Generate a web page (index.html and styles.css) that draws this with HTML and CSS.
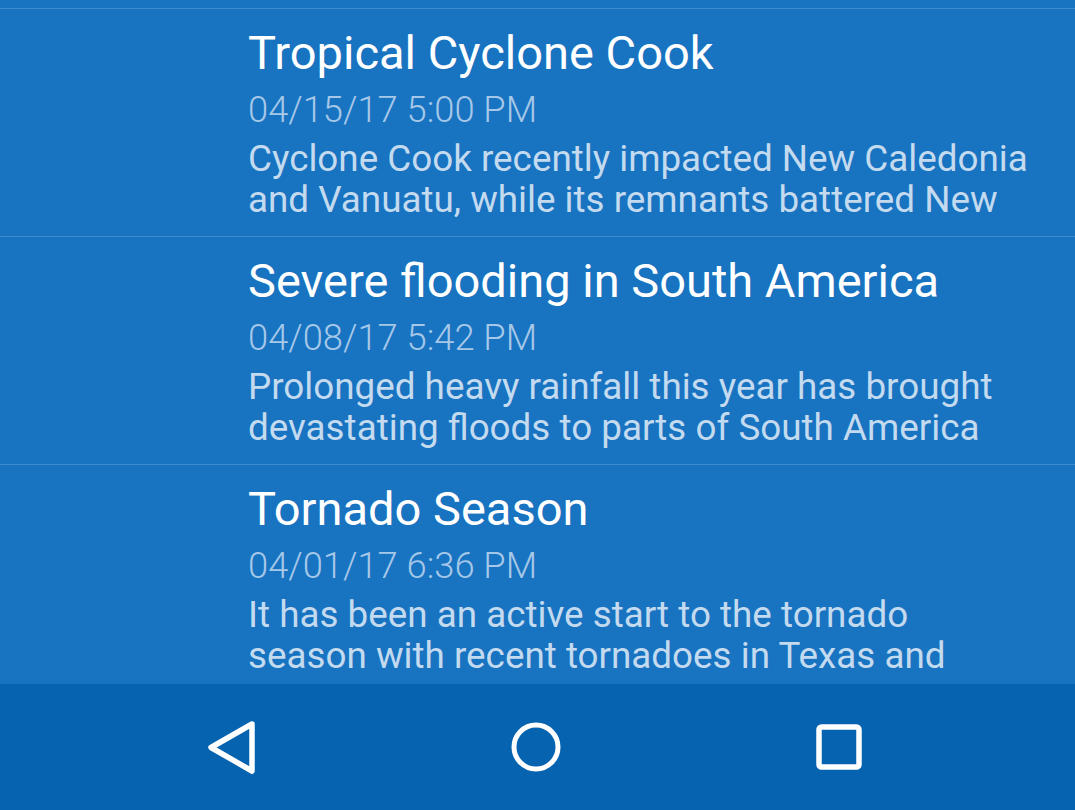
FILE: index.html
```html
<!DOCTYPE html>
<html>
<head>
<meta charset="utf-8">
<link rel="stylesheet" href="styles.css">
</head>
<body>
<div class="screen">
  <div class="list">
    <div class="spacer"></div>
    <div class="item">
      <div class="title">Tropical Cyclone Cook</div>
      <div class="date">04/15/17 5:00 PM</div>
      <div class="desc">
        <span class="line">Cyclone Cook recently impacted New Caledonia</span>
        <span class="line">and Vanuatu, while its remnants battered New</span>
      </div>
    </div>
    <div class="item">
      <div class="title">Severe flooding in South America</div>
      <div class="date">04/08/17 5:42 PM</div>
      <div class="desc">
        <span class="line">Prolonged heavy rainfall this year has brought</span>
        <span class="line">devastating floods to parts of South America</span>
      </div>
    </div>
    <div class="item">
      <div class="title">Tornado Season</div>
      <div class="date">04/01/17 6:36 PM</div>
      <div class="desc">
        <span class="line">It has been an active start to the tornado</span>
        <span class="line">season with recent tornadoes in Texas and</span>
      </div>
    </div>
  </div>
  <div class="navbar">
    <svg class="nav-icon" width="60" height="60" viewBox="0 0 60 60">
      <path d="M50 7 L9 30.5 L50 54 Z" fill="none" stroke="#fff" stroke-width="5.5" stroke-linejoin="round"/>
    </svg>
    <svg class="nav-icon" width="60" height="60" viewBox="0 0 60 60">
      <circle cx="30" cy="30" r="22" fill="none" stroke="#fff" stroke-width="5"/>
    </svg>
    <svg class="nav-icon" width="60" height="60" viewBox="0 0 60 60">
      <rect x="10" y="10" width="40" height="40" rx="2.5" fill="none" stroke="#fff" stroke-width="5.5"/>
    </svg>
  </div>
</div>
</body>
</html>
```
FILE: styles.css
```css
html, body {
  margin: 0;
  padding: 0;
}
body {
  width: 1075px;
  height: 810px;
  overflow: hidden;
  background: #1873c1;
  font-family: Roboto, "Liberation Sans", sans-serif;
}
.screen {
  display: flex;
  flex-direction: column;
  height: 810px;
}
.list {
  flex: 1;
  overflow: hidden;
  background: #1873c1;
}
.spacer {
  height: 8px;
}
.item {
  border-top: 1px solid #3d8acd;
  padding: 18px 16px 16px 248px;
}
.title {
  color: #ffffff;
  font-size: 47px;
  line-height: 52px;
  white-space: nowrap;
}
.date {
  color: #a6c8e8;
  font-size: 36.3px;
  font-weight: 300;
  line-height: 56px;
  margin-top: 3px;
}
.desc {
  color: #c3daef;
  font-size: 36.8px;
  line-height: 41px;
  height: 82px;
  overflow: hidden;
}
.line {
  display: block;
  white-space: nowrap;
}
.navbar {
  height: 126px;
  flex: none;
  background: #0563b0;
  display: flex;
  align-items: center;
  justify-content: space-between;
  padding: 0 206px 0 202px;
}
.nav-icon {
  display: block;
}
```
